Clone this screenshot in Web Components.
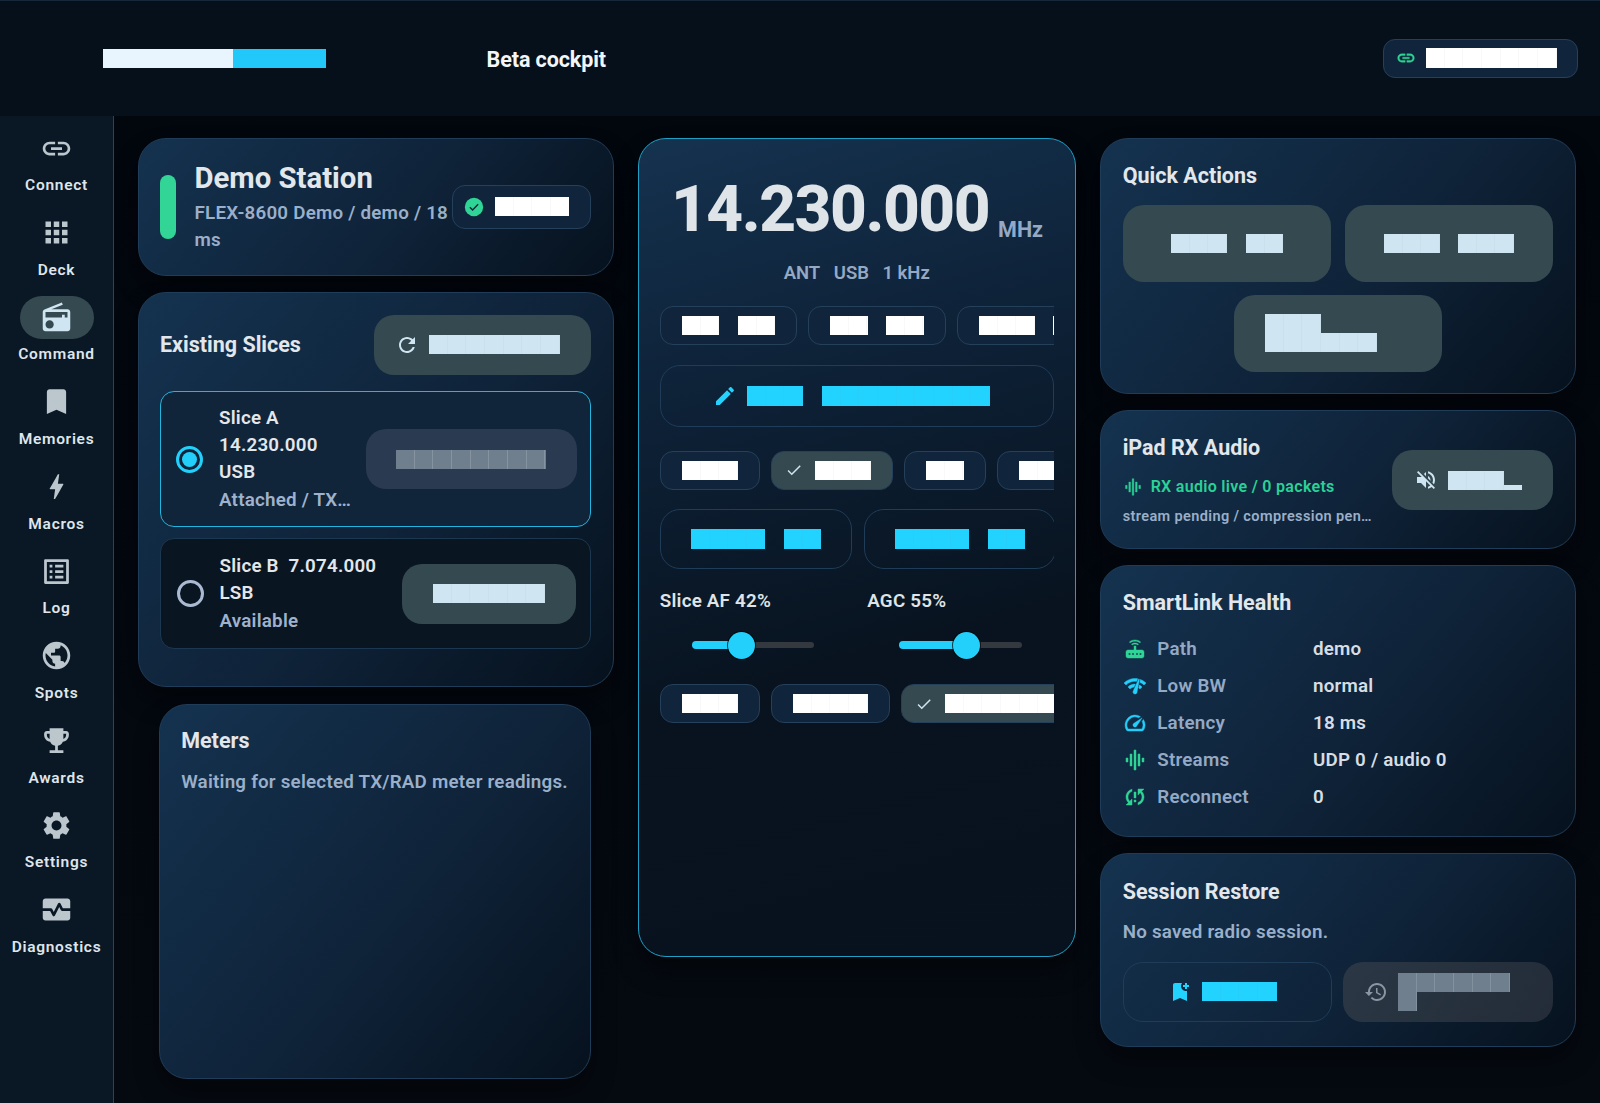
<!DOCTYPE html>
<html lang="en">
<head>
<meta charset="utf-8">
<title>Beta cockpit</title>
<style>
  html, body { margin: 0; height: 100%; background: #03070e; }
  body { font-family: Roboto, "Liberation Sans", sans-serif; overflow: hidden; }
  #shell { display: grid; grid-template-columns: 114px 1fr; grid-template-rows: 116px 1fr; height: 1103px; }
  rc-topbar { grid-column: 1 / 3; }
  #columns { display: grid; grid-template-columns: 475.5px 438px 476px; column-gap: 24.25px; align-items: start; padding: 22px 24px 0; background: linear-gradient(180deg, #02060d, #050a11); }
  .stack { display: flex; flex-direction: column; gap: 16px; }
  .row { display: flex; align-items: center; }
</style>
</head>
<body>
<div id="shell">
  <rc-topbar title="Beta cockpit"></rc-topbar>
  <rc-rail>
    <rc-rail-item icon="link" label="Connect"></rc-rail-item>
    <rc-rail-item icon="apps" label="Deck"></rc-rail-item>
    <rc-rail-item icon="radio" label="Command" active></rc-rail-item>
    <rc-rail-item icon="bookmark" label="Memories"></rc-rail-item>
    <rc-rail-item icon="bolt" label="Macros"></rc-rail-item>
    <rc-rail-item icon="list" label="Log"></rc-rail-item>
    <rc-rail-item icon="public" label="Spots"></rc-rail-item>
    <rc-rail-item icon="trophy" label="Awards"></rc-rail-item>
    <rc-rail-item icon="settings" label="Settings"></rc-rail-item>
    <rc-rail-item icon="monitor" label="Diagnostics"></rc-rail-item>
  </rc-rail>
  <div id="columns">
    <div class="stack">
      <rc-card style="padding:21px 22px 21px 21px; height:137.5px; display:flex; align-items:center">
        <rc-station name="Demo Station" detail="FLEX-8600 Demo / demo / 18 ms"></rc-station>
      </rc-card>
      <rc-card style="padding:22px 22px 36.3px 21px">
        <div class="row" style="justify-content:space-between; margin-bottom:16.7px">
          <rc-title>Existing Slices</rc-title>
          <rc-btn kind="fill" icon="refresh" words="7" style="width:216.5px"></rc-btn>
        </div>
        <rc-slice selected lines="Slice A,14.230.000,USB" status="Attached / TX…" cells="8" btn="211" style="margin-bottom:11px"></rc-slice>
        <rc-slice lines="Slice B  7.074.000,LSB" status="Available" cells="6" btn="174"></rc-slice>
      </rc-card>
      <rc-card style="margin:1px 22.7px 0 21.2px; height:375px; padding:22.5px 21px">
        <rc-title>Meters</rc-title>
        <rc-note style="margin-top:13.6px">Waiting for selected TX/RAD meter readings.</rc-note>
      </rc-card>
    </div>

    <rc-card accent style="height:819px; padding:33px 21px 0">
      <rc-freq value="14.230.000" unit="MHz"></rc-freq>
      <rc-readout style="margin-top:12.2px"><span>ANT</span><span>USB</span><span>1 kHz</span></rc-readout>
      <rc-strip style="margin-top:18.8px">
        <rc-btn kind="chip" words="2 2"></rc-btn>
        <rc-btn kind="chip" words="2 2"></rc-btn>
        <rc-btn kind="chip" words="3 3"></rc-btn>
      </rc-strip>
      <rc-btn kind="line" icon="edit" words="3 9" style="margin-top:19.6px; height:62.4px"></rc-btn>
      <rc-strip style="margin-top:23.3px">
        <rc-btn kind="chip" words="3"></rc-btn>
        <rc-btn kind="chip" words="3" icon="check" selected></rc-btn>
        <rc-btn kind="chip" words="2"></rc-btn>
        <rc-btn kind="chip" words="4"></rc-btn>
      </rc-strip>
      <rc-strip style="margin-top:19px">
        <rc-btn kind="line" words="4 2" style="width:192.6px"></rc-btn>
        <rc-btn kind="line" words="4 2" style="width:192.6px"></rc-btn>
      </rc-strip>
      <div style="display:grid; grid-template-columns:185.5px 185.5px; column-gap:22px; margin-top:19.1px">
        <rc-slider label="Slice AF 42%" value="42" pos="49.7"></rc-slider>
        <rc-slider label="AGC 55%" value="55" pos="67"></rc-slider>
      </div>
      <rc-strip style="margin-top:25px">
        <rc-btn kind="chip" words="3"></rc-btn>
        <rc-btn kind="chip" words="4"></rc-btn>
        <rc-btn kind="chip" words="8" icon="check" selected></rc-btn>
      </rc-strip>
    </rc-card>

    <div class="stack">
      <rc-card style="padding:22.5px 21.67px 21px">
        <rc-title>Quick Actions</rc-title>
        <div style="display:flex; flex-wrap:wrap; justify-content:center; gap:13.4px; margin-top:15.5px">
          <rc-btn kind="tile" words="3 2"></rc-btn>
          <rc-btn kind="tile" words="3 3"></rc-btn>
          <rc-btn kind="tile" rows="3;6" style="justify-content:flex-start; padding-left:31.3px"></rc-btn>
        </div>
      </rc-card>
      <rc-card style="padding:22px 21.67px 20.5px">
        <div class="row" style="justify-content:space-between">
          <div style="padding-top:1px">
            <rc-title>iPad RX Audio</rc-title>
            <rc-audio-status style="margin-top:13px" text="RX audio live / 0 packets"></rc-audio-status>
            <rc-fine style="margin-top:7px">stream pending / compression pen…</rc-fine>
          </div>
          <rc-btn kind="fill" icon="mute" words="3" tail="1" style="width:161px"></rc-btn>
        </div>
      </rc-card>
      <rc-card style="padding:22.3px 21.67px 20.5px">
        <rc-title style="margin-bottom:13.5px">SmartLink Health</rc-title>
        <rc-stat icon="router" tint="#2fd596" label="Path" value="demo"></rc-stat>
        <rc-stat icon="netcheck" tint="#22d0fb" label="Low BW" value="normal"></rc-stat>
        <rc-stat icon="speed" tint="#22d0fb" label="Latency" value="18 ms"></rc-stat>
        <rc-stat icon="eq" tint="#2fd596" label="Streams" value="UDP 0 / audio 0"></rc-stat>
        <rc-stat icon="syncproblem" tint="#2fd596" label="Reconnect" value="0"></rc-stat>
      </rc-card>
      <rc-card style="padding:24.5px 21.67px 24px">
        <rc-title>Session Restore</rc-title>
        <rc-note style="margin-top:12.5px">No saved radio session.</rc-note>
        <div style="display:grid; grid-template-columns:209.6px 210px; column-gap:11px; margin-top:17px">
          <rc-btn kind="line" icon="bookmarkadd" words="4"></rc-btn>
          <rc-btn kind="off" icon="history" rows="6;1" style="justify-content:flex-start"></rc-btn>
        </div>
      </rc-card>
    </div>
  </div>
</div>

<script>
const ICONS = {
  link: 'M3.9 12c0-1.71 1.39-3.1 3.1-3.1h4V7H7c-2.76 0-5 2.24-5 5s2.24 5 5 5h4v-1.9H7c-1.71 0-3.1-1.39-3.1-3.1zM8 13h8v-2H8v2zm9-6h-4v1.9h4c1.71 0 3.1 1.39 3.1 3.1s-1.39 3.1-3.1 3.1h-4V17h4c2.76 0 5-2.24 5-5s-2.24-5-5-5z',
  apps: 'M4 8h4V4H4v4zm6 12h4v-4h-4v4zm-6 0h4v-4H4v4zm0-6h4v-4H4v4zm6 0h4v-4h-4v4zm6-10v4h4V4h-4zm-6 4h4V4h-4v4zm6 6h4v-4h-4v4zm0 6h4v-4h-4v4z',
  radio: 'M3.24 6.15C2.51 6.43 2 7.17 2 8v12c0 1.1.89 2 2 2h16c1.11 0 2-.9 2-2V8c0-1.11-.89-2-2-2H8.3l8.26-3.34L15.88 1 3.24 6.15zM7 20c-1.66 0-3-1.34-3-3s1.34-3 3-3 3 1.34 3 3-1.34 3-3 3zm13-8h-2v-2h-2v2H4V8h16v4z',
  bookmark: 'M17 3H7c-1.1 0-1.99.9-1.99 2L5 21l7-3 7 3V5c0-1.1-.9-2-2-2z',
  bolt: 'M11 21h-1l1-7H7.5c-.58 0-.57-.32-.38-.66.19-.34.05-.08.07-.12C8.48 10.94 10.42 7.54 13 3h1l-1 7h3.5c.49 0 .56.33.47.51l-.07.15C12.96 17.55 11 21 11 21z',
  list: 'M19 5v14H5V5h14m1.1-2H3.9c-.5 0-.9.4-.9.9v16.2c0 .4.4.9.9.9h16.2c.4 0 .9-.5.9-.9V3.9c0-.5-.5-.9-.9-.9zM11 7h6v2h-6V7zm0 4h6v2h-6v-2zm0 4h6v2h-6zM7 7h2v2H7zm0 4h2v2H7zm0 4h2v2H7z',
  public: 'M12 2C6.48 2 2 6.48 2 12s4.48 10 10 10 10-4.48 10-10S17.52 2 12 2zm-1 17.93c-3.95-.49-7-3.85-7-7.93 0-.62.08-1.21.21-1.79L9 15v1c0 1.1.9 2 2 2v1.93zm6.9-2.54c-.26-.81-1-1.39-1.9-1.39h-1v-3c0-.55-.45-1-1-1H8v-2h2c.55 0 1-.45 1-1V7h2c1.1 0 2-.9 2-2v-.41c2.93 1.19 5 4.06 5 7.41 0 2.08-.8 3.97-2.1 5.39z',
  trophy: 'M19 5h-2V3H7v2H5c-1.1 0-2 .9-2 2v1c0 2.55 1.92 4.63 4.39 4.94.63 1.5 1.98 2.63 3.61 2.96V19H7v2h10v-2h-4v-3.1c1.63-.33 2.98-1.46 3.61-2.96C19.08 12.63 21 10.55 21 8V7c0-1.1-.9-2-2-2zM5 8V7h2v3.82C5.84 10.4 5 9.3 5 8zm14 0c0 1.3-.84 2.4-2 2.82V7h2v1z',
  settings: 'M19.14 12.94c.04-.3.06-.61.06-.94 0-.32-.02-.64-.07-.94l2.03-1.58c.18-.14.23-.41.12-.61l-1.92-3.32c-.12-.22-.37-.29-.59-.22l-2.39.96c-.5-.38-1.03-.7-1.62-.94l-.36-2.54c-.04-.24-.24-.41-.48-.41h-3.84c-.24 0-.43.17-.47.41l-.36 2.54c-.59.24-1.13.57-1.62.94l-2.39-.96c-.22-.08-.47 0-.59.22L2.74 8.87c-.12.21-.08.47.12.61l2.03 1.58c-.05.3-.09.63-.09.94s.02.64.07.94l-2.03 1.58c-.18.14-.23.41-.12.61l1.92 3.32c.12.22.37.29.59.22l2.39-.96c.5.38 1.03.7 1.62.94l.36 2.54c.05.24.24.41.48.41h3.84c.24 0 .44-.17.47-.41l.36-2.54c.59-.24 1.13-.56 1.62-.94l2.39.96c.22.08.47 0 .59-.22l1.92-3.32c.12-.22.07-.47-.12-.61l-2.01-1.58zM12 15.6c-1.98 0-3.6-1.62-3.6-3.6s1.62-3.6 3.6-3.6 3.6 1.62 3.6 3.6-1.62 3.6-3.6 3.6z',
  monitor: 'M15.11 12.45 14 10.24l-3.11 6.21c-.16.34-.51.55-.89.55s-.73-.21-.89-.55L7.38 13H2v5c0 1.1.9 2 2 2h16c1.1 0 2-.9 2-2v-5h-6c-.38 0-.73-.21-.89-.55zM20 4H4c-1.1 0-2 .9-2 2v5h6c.38 0 .73.21.89.55L10 13.76l3.11-6.21c.34-.68 1.45-.68 1.79 0L16.62 11H22V6c0-1.1-.9-2-2-2z',
  refresh: 'M17.65 6.35C16.2 4.9 14.21 4 12 4c-4.42 0-7.99 3.58-7.99 8s3.57 8 7.99 8c3.73 0 6.84-2.55 7.73-6h-2.08c-.82 2.33-3.04 4-5.65 4-3.31 0-6-2.69-6-6s2.69-6 6-6c1.66 0 3.14.69 4.22 1.78L13 11h7V4l-2.35 2.35z',
  edit: 'M3 17.25V21h3.75L17.81 9.94l-3.75-3.75L3 17.25zM20.71 7.04c.39-.39.39-1.02 0-1.41l-2.34-2.34c-.39-.39-1.02-.39-1.41 0l-1.83 1.83 3.75 3.75 1.83-1.83z',
  check: 'M9 16.17L4.83 12l-1.42 1.41L9 19 21 7l-1.41-1.41z',
  mute: 'M16.5 12c0-1.77-1.02-3.29-2.5-4.03v2.21l2.45 2.45c.03-.2.05-.41.05-.63zm2.5 0c0 .94-.2 1.82-.54 2.64l1.51 1.51C20.63 14.91 21 13.5 21 12c0-4.28-2.99-7.86-7-8.77v2.06c2.89.86 5 3.54 5 6.71zM4.27 3L3 4.27 7.73 9H3v6h4l5 5v-6.73l4.25 4.25c-.67.52-1.42.93-2.25 1.18v2.06c1.38-.31 2.63-.95 3.69-1.81L19.73 21 21 19.73l-9-9L4.27 3zM12 4L9.91 6.09 12 8.18V4z',
  eq: 'M7 18h2V6H7v12zm4 4h2V2h-2v20zm-8-8h2v-4H3v4zm12 4h2V6h-2v12zm4-8v4h2v-4h-2z',
  router: 'M16.9 5.8l.8-.8C16.3 3.7 14.2 3 12 3s-4.3.7-5.7 2l.8.8C8.3 4.800 10.100 4.200 12 4.200s3.700.6 4.900 1.600zM15.500 7.200c-.9-.8-2.200-1.300-3.500-1.300s-2.600.5-3.500 1.300l.8.800c.7-.6 1.700-.9 2.700-.9s2 .3 2.700.9l.8-.8zM19 13h-6V9h-2v4H5c-1.100 0-2 .9-2 2v4c0 1.100.9 2 2 2h14c1.100 0 2-.9 2-2v-4c0-1.100-.9-2-2-2zM7.500 18h-2v-2h2v2zm3.500 0H9v-2h2v2zm4 0h-2v-2h2v2zm3.500 0h-2v-2h2v2z',
  netcheck: 'M15.9 5c-.17 0-.32.09-.41.23l-.07.15-5.18 11.65c-.16.29-.26.61-.26.96 0 1.11.9 2.01 2.01 2.01.96 0 1.77-.68 1.96-1.59l.01-.03L16.4 5.500c0-.28-.22-.5-.5-.5zM1 9l2 2c2.880-2.880 6.790-4.080 10.530-3.620l1.190-2.680C9.890 3.840 4.740 5.270 1 9zm20 2l2-2c-1.640-1.640-3.550-2.820-5.590-3.570l-.53 2.820c1.500.62 2.900 1.530 4.120 2.750zm-4 4l2-2c-.8-.8-1.700-1.420-2.660-1.890l-.55 2.920c.42.27.83.59 1.210.97zM5 13l2 2c1.130-1.130 2.560-1.790 4.030-2l1.280-2.880c-2.630-.08-5.300.87-7.310 2.880z',
  speed: 'M20.380 8.570l-1.230 1.850a8 8 0 0 1-.22 7.580H5.070A8 8 0 0 1 15.580 6.850l1.850-1.230A10 10 0 0 0 3.350 19a2 2 0 0 0 1.720 1h13.850a2 2 0 0 0 1.740-1 10 10 0 0 0-.27-10.440zm-9.790 6.840a2 2 0 0 0 2.830 0l5.660-8.490-8.490 5.660a2 2 0 0 0 0 2.830z',
  syncproblem: 'M3 12c0 2.210.91 4.200 2.360 5.640L3 20h6v-6l-2.240 2.240C5.680 15.150 5 13.660 5 12c0-2.610 1.670-4.830 4-5.650V4.260C5.550 5.150 3 8.270 3 12zm8 5h2v-2h-2v2zM21 4h-6v6l2.240-2.240C18.320 8.850 19 10.340 19 12c0 2.610-1.670 4.830-4 5.650v2.090c3.450-.89 6-4.010 6-7.740 0-2.210-.91-4.200-2.360-5.640L21 4zm-10 9h2V7h-2v6z',
  bookmarkadd: 'M21 7h-2v2h-2V7h-2V5h2V3h2v2h2v2zm-2 14l-7-3-7 3V5c0-1.100.9-2 2-2h7c-.63.84-1 1.870-1 3 0 2.760 2.240 5 5 5 .34 0 .67-.03 1-.1V21z',
  history: 'M13 3c-4.970 0-9 4.030-9 9H1l3.890 3.890.07.14L9 12H6c0-3.870 3.130-7 7-7s7 3.130 7 7-3.130 7-7 7c-1.930 0-3.680-.79-4.940-2.060l-1.420 1.420C8.270 19.990 10.510 21 13 21c4.970 0 9-4.030 9-9s-4.030-9-9-9zm-1 5v5l4.280 2.540.72-1.210-3.500-2.080V8H12z'
};

// body text used all over the cards
const BODY = 'font: 650 18.8px Roboto, sans-serif; letter-spacing: .22px;';

// small base class, every element gets an open shadow root filled from its own markup
class Base extends HTMLElement {
  constructor() {
    super();
    this.attachShadow({mode: 'open'});
  }
  connectedCallback() {
    this.shadowRoot.innerHTML = '<style>' + this.css() + '</style>' + this.html();
  }
  attr(name, fallback) {
    return this.hasAttribute(name) ? this.getAttribute(name) : fallback;
  }
  css() { return ':host { display: block; }'; }
  html() { return '<slot></slot>'; }
}

class RcIcon extends Base {
  css() {
    var s = this.attr('size', '24');
    var bold = this.hasAttribute('bold') ? 'stroke: currentColor; stroke-width: .45;' : '';
    return ':host { display: inline-flex; flex: none; width: ' + s + 'px; height: ' + s + 'px; } svg { width: 100%; height: 100%; fill: currentColor; display: block; ' + bold + ' }';
  }
  html() {
    return '<svg viewBox="0 0 24 24"><path d="' + ICONS[this.attr('name', 'link')] + '"/></svg>';
  }
}

// the label blocks: one block per word, cell wide per character
const CELL = 18.67;
class RcTofu extends Base {
  css() {
    return `
      :host { display: inline-flex; flex: none; }
      .words { display: flex; gap: ${CELL}px; align-items: flex-end; }
      .rows { display: flex; flex-direction: column; }
      .rows i + i { margin-top: -0.7px; }
      i { display: block; height: 19.4px; background-color: currentColor;
          background-image: repeating-linear-gradient(90deg, transparent 0 ${CELL - 1}px, var(--seam, rgba(120,130,140,.05)) ${CELL - 1}px ${CELL}px); }
      .tail { display: flex; align-items: flex-end; }
      .tail b { display: block; height: 5.4px; background: currentColor; }
    `;
  }
  html() {
    var block = function(n) { return '<i style="width:' + (n * CELL) + 'px"></i>'; };
    if(this.hasAttribute('rows')) {
      return '<div class="rows">' + this.getAttribute('rows').split(';').map(block).join('') + '</div>';
    }
    var out = '<div class="words">' + this.attr('words', '1').split(' ').map(block).join('') + '</div>';
    if(this.hasAttribute('tail')) {
      out += '<div class="tail"><b style="width:' + (this.getAttribute('tail') * CELL) + 'px"></b></div>';
    }
    return out;
  }
}

class RcTopbar extends Base {
  css() {
    return `
      :host { display: flex; align-items: center; height: 116px; box-sizing: border-box; padding: 0 22px 0 103px;
              background: #06101a; border-top: 1px solid #17283a; }
      .logo { display: flex; height: 19.4px; }
      .logo i { display: block; height: 100%; }
      h1 { margin: 3px auto 0 160.3px; font: 700 21.5px/28px Roboto, sans-serif; color: #f3f6f8; letter-spacing: -0.1px; }
      .chip { display: flex; align-items: center; width: 195px; height: 39px; box-sizing: border-box; margin-top: -1px; padding-left: 11.5px; gap: 10.5px;
              border-radius: 12px; background: #10253b; border: 1px solid #25405a; }
      rc-icon { color: #2fd596; }
      rc-tofu { color: #fff; }
    `;
  }
  html() {
    return `
      <div class="logo"><i style="width:129.5px;background:#e8f5fe"></i><i style="width:93.8px;background:#22c8fa"></i></div>
      <h1>${this.attr('title', '')}</h1>
      <div class="chip"><rc-icon name="link" size="20" bold></rc-icon><rc-tofu words="7"></rc-tofu></div>
    `;
  }
}

class RcRail extends Base {
  css() {
    return `
      :host { display: flex; flex-direction: column; gap: 14.67px; box-sizing: border-box; padding-top: 10.5px;
              background: #0a1725; border-right: 1.5px solid #33434e; }
    `;
  }
}

class RcRailItem extends Base {
  css() {
    var on = this.hasAttribute('active');
    return `
      :host { display: flex; flex-direction: column; align-items: center; height: 70px; }
      .pill { display: flex; align-items: center; justify-content: center; width: 74px; height: 43px; border-radius: 22px;
              background: ${on ? '#354950' : 'transparent'}; color: ${on ? '#cfe5f1' : '#bcc6cd'}; }
      span { margin-top: 4.5px; font: 600 15.5px/22px Roboto, sans-serif; letter-spacing: .7px; color: #dfe6ec; white-space: nowrap; }
    `;
  }
  html() {
    return `<div class="pill"><rc-icon name="${this.attr('icon')}" size="33"></rc-icon></div><span>${this.attr('label')}</span>`;
  }
}

class RcCard extends Base {
  css() {
    var accent = this.hasAttribute('accent');
    return `
      :host { display: block; box-sizing: border-box; border-radius: 28px;
              border: ${accent ? '1.5px solid #1f9fc4' : '1px solid #1f3c58'};
              background: ${accent ? 'linear-gradient(165deg, #15324f 0%, #0d2035 32%, #08131f 62%, #07121e 100%)' : 'linear-gradient(130deg, #14324f 0%, #0f2339 55%, #06111d 100%)'};
              box-shadow: 0 14px 24px rgba(0,0,0,.38); }
    `;
  }
}

class RcTitle extends Base {
  css() {
    return ':host { display: block; font: 700 21.5px/28px Roboto, sans-serif; color: #e2e7ec; }';
  }
}

class RcNote extends Base {
  css() {
    return ':host { display: block; ' + BODY + ' line-height: 26px; color: #9aafc9; }';
  }
}

class RcFine extends Base {
  css() {
    return ':host { display: block; font: 650 14.5px/22px Roboto, sans-serif; letter-spacing: .38px; color: #9aafc9; white-space: nowrap; }';
  }
}

class RcStation extends Base {
  css() {
    return `
      :host { display: flex; align-items: center; width: 100%; }
      .bar { flex: none; width: 16px; height: 64px; border-radius: 8px; background: #32d596; margin-right: 18.5px; }
      .txt { flex: 1; min-width: 0; }
      h2 { margin: 0 0 3.5px; font: 700 29.3px/36px Roboto, sans-serif; color: #e2e7ec; }
      p { margin: 0; ${BODY} line-height: 27px; color: #9aafc9; }
      .chip { flex: none; display: flex; align-items: center; box-sizing: border-box; width: 139px; height: 44px; padding-left: 10px; gap: 10px;
              border-radius: 13px; background: #10253b; border: 1px solid #25405a; }
      svg { width: 22px; height: 22px; flex: none; }
      rc-tofu { color: #fff; }
    `;
  }
  html() {
    return `
      <div class="bar"></div>
      <div class="txt"><h2>${this.attr('name')}</h2><p>${this.attr('detail')}</p></div>
      <div class="chip">
        <svg viewBox="0 0 24 24"><circle cx="12" cy="12" r="10" fill="#2fd596"/><path d="M7.500 12.300l3 3 6-6.300" fill="none" stroke="#0b2233" stroke-width="1.500"/></svg>
        <rc-tofu words="4"></rc-tofu>
      </div>
    `;
  }
}

// every button in the page, the kind gives height, radius and colours
const KINDS = {
  fill: 'height:60px;border-radius:20px;background:#354950;color:#cfe5f1;',
  tile: 'width:208.3px;height:76.7px;border-radius:21px;background:#354950;color:#cfe5f1;',
  line: 'height:60px;border-radius:20px;background:transparent;border:1px solid #1f3c58;color:#22d3ff;',
  chip: 'height:39.3px;border-radius:13px;background:#10253b;border:1px solid #25405a;color:#fff;padding:0 21px;',
  off:  'height:60px;border-radius:20px;background:linear-gradient(120deg,#2b3745,#232c38);color:#6f7f8d;padding-left:21px;--seam:rgba(200,210,220,.22);'
};
class RcBtn extends Base {
  css() {
    var kind = this.attr('kind', 'fill');
    var sel = this.hasAttribute('selected');
    var pad = this.hasAttribute('icon') && (kind === 'fill' || kind === 'line') ? 'padding-right:10px;' : '';
    return `
      :host { display: flex; flex: none; align-items: center; justify-content: center; box-sizing: border-box; ${KINDS[kind]} ${pad}
              ${sel ? 'background:#354950;padding:0 21px 0 13.3px;' : ''} gap: ${kind === 'chip' ? 12 : 10}px; }
      rc-icon { color: ${sel ? '#cfe5f1' : kind === 'off' ? '#8a97a3' : 'inherit'}; }
    `;
  }
  html() {
    var icon = this.attr('icon', '');
    var size = icon === 'check' ? 18 : 24;
    var out = icon ? '<rc-icon name="' + icon + '" size="' + size + '"></rc-icon>' : '';
    var tail = this.hasAttribute('tail') ? ' tail="' + this.getAttribute('tail') + '"' : '';
    if(this.hasAttribute('rows')) {
      out += '<rc-tofu rows="' + this.getAttribute('rows') + '"></rc-tofu>';
    } else {
      out += '<rc-tofu words="' + this.attr('words', '1') + '"' + tail + '></rc-tofu>';
    }
    return out;
  }
}

class RcStrip extends Base {
  css() {
    return ':host { display: flex; gap: 11.2px; overflow: hidden; }';
  }
}

class RcSlice extends Base {
  css() {
    var on = this.hasAttribute('selected');
    return `
      :host { display: flex; align-items: center; gap: 12px; box-sizing: border-box; border-radius: 14px;
              padding: ${on ? '10.85px 13px 10.85px 15px' : '11.95px 13.5px 11.95px 15.5px'};
              background: ${on ? '#10243a' : '#0a1522'}; border: ${on ? '1.5px solid #22b5dd' : '1px solid #1c3850'}; }
      .radio { flex: none; width: 27px; height: 27px; box-sizing: border-box; border-radius: 50%; margin-right: 4px;
               border: 3px solid ${on ? '#22d0fb' : '#a9bad2'}; display: flex; align-items: center; justify-content: center; }
      .radio i { display: ${on ? 'block' : 'none'}; width: 15px; height: 15px; border-radius: 50%; background: #22d0fb; }
      .txt { flex: 1; min-width: 0; padding-top: ${on ? 2.3 : 1.7}px; ${BODY} line-height: 26.7px; color: #e2e7ec; }
      .txt div { white-space: pre; }
      .status { line-height: 30px; color: #9fb2cc; }
      .btn { flex: none; display: flex; align-items: center; justify-content: center; height: 60px; border-radius: 20px;
             background: ${on ? '#2a3a50' : '#354950'}; color: ${on ? '#6f7f8d' : '#cfe5f1'}; --seam: ${on ? 'rgba(200,210,220,.25)' : 'rgba(120,130,140,.05)'}; }
    `;
  }
  html() {
    var lines = this.attr('lines', '').split(',').map(function(l) { return '<div>' + l + '</div>'; }).join('');
    return `
      <div class="radio"><i></i></div>
      <div class="txt">${lines}<div class="status">${this.attr('status')}</div></div>
      <div class="btn" style="width:${this.attr('btn')}px"><rc-tofu words="${this.attr('cells')}"></rc-tofu></div>
    `;
  }
}

class RcFreq extends Base {
  css() {
    return `
      :host { display: flex; justify-content: center; align-items: flex-end; gap: 9px; height: 75px; padding-left: .5px; }
      b { font: 800 64px/75px Roboto, sans-serif; letter-spacing: -1.5px; color: #dfe4e8; }
      span { font: 700 21.5px/24px Roboto, sans-serif; color: #94a9c4; margin-bottom: 5.300px; }
    `;
  }
  html() {
    return `<b>${this.attr('value')}</b><span>${this.attr('unit')}</span>`;
  }
}

class RcReadout extends Base {
  css() {
    return `
      :host { display: flex; justify-content: center; gap: 13.5px; font: 650 18.5px/28px Roboto, sans-serif; color: #94a9c4; }
    `;
  }
}

class RcSlider extends Base {
  css() {
    var pos = +this.attr('pos', 0);
    return `
      :host { display: block; }
      label { display: block; ${BODY} line-height: 26px; color: #dfe4e8; }
      .rail { position: relative; height: 27px; margin: 18px 31px 0 32px; }
      .on, .rest { position: absolute; top: 50%; transform: translateY(-50%); }
      .on { left: 0; width: ${pos - 10}px; height: 8px; border-radius: 4px 0 0 4px; background: #22d0fb; }
      .rest { left: ${pos + 10}px; right: 0; height: 6px; border-radius: 0 3px 3px 0; background: #33393e; }
      .thumb { position: absolute; left: ${pos - 13.5}px; top: 0; width: 27px; height: 27px; border-radius: 50%; background: #22d0fb; box-shadow: 0 0 0 1px rgba(0,0,0,.7); }
    `;
  }
  html() {
    return `<label>${this.attr('label')}</label>
      <div class="rail" role="slider" aria-valuenow="${this.attr('value')}"><div class="on"></div><div class="rest"></div><div class="thumb"></div></div>`;
  }
}

class RcAudioStatus extends Base {
  css() {
    return `
      :host { display: flex; align-items: center; gap: 8px; height: 24px; padding-left: 0; font: 650 16px/24px Roboto, sans-serif; letter-spacing: .3px; color: #2bd197; white-space: nowrap; }
    `;
  }
  html() {
    return `<rc-icon name="eq" size="20" bold></rc-icon><span>${this.attr('text')}</span>`;
  }
}

class RcStat extends Base {
  css() {
    return `
      :host { display: grid; grid-template-columns: 34.6px 155.7px 1fr; align-items: center; height: 37px; ${BODY} line-height: 26px; }
      rc-icon { color: ${this.attr('tint')}; }
      .k { color: #94a9c4; }
      .v { color: #d6dde5; }
    `;
  }
  html() {
    return `<rc-icon name="${this.attr('icon')}" size="24" bold></rc-icon><span class="k">${this.attr('label')}</span><span class="v">${this.attr('value')}</span>`;
  }
}

customElements.define('rc-icon', RcIcon);
customElements.define('rc-tofu', RcTofu);
customElements.define('rc-topbar', RcTopbar);
customElements.define('rc-rail', RcRail);
customElements.define('rc-rail-item', RcRailItem);
customElements.define('rc-card', RcCard);
customElements.define('rc-title', RcTitle);
customElements.define('rc-note', RcNote);
customElements.define('rc-fine', RcFine);
customElements.define('rc-station', RcStation);
customElements.define('rc-btn', RcBtn);
customElements.define('rc-strip', RcStrip);
customElements.define('rc-slice', RcSlice);
customElements.define('rc-freq', RcFreq);
customElements.define('rc-readout', RcReadout);
customElements.define('rc-slider', RcSlider);
customElements.define('rc-audio-status', RcAudioStatus);
customElements.define('rc-stat', RcStat);
</script>
</body>
</html>
